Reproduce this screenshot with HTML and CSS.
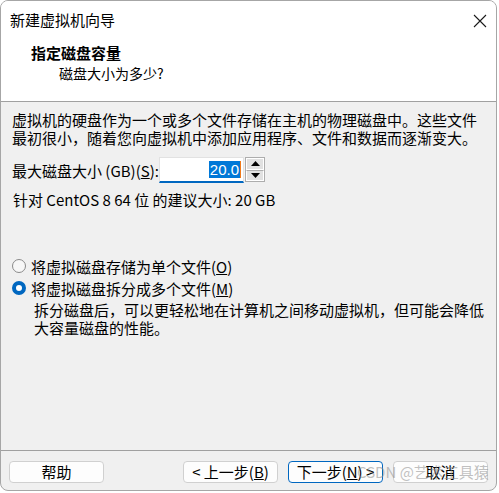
FILE: index.html
```html
<!DOCTYPE html>
<html lang="zh-CN">
<head>
<meta charset="utf-8">
<title>新建虚拟机向导</title>
<link rel="stylesheet" href="styles.css">
</head>
<body>
<div class="window">
  <div class="titlebar">
    <span class="title">新建虚拟机向导</span>
    <svg class="close" width="14" height="14" viewBox="0 0 14 14"><path d="M1 1L13 13M13 1L1 13" stroke="#1a1a1a" stroke-width="1.1" fill="none"/></svg>
  </div>
  <div class="header">
    <div class="h-title">指定磁盘容量</div>
    <div class="h-sub">磁盘大小为多少?</div>
  </div>
  <div class="content">
    <p class="intro">虚拟机的硬盘作为一个或多个文件存储在主机的物理磁盘中。这些文件<br>最初很小，随着您向虚拟机中添加应用程序、文件和数据而逐渐变大。</p>
    <div class="size-row">
      <span class="label">最大磁盘大小 (GB)(<u>S</u>):</span>
      <div class="input"><span class="sel">20.0</span><span class="caret"></span></div>
      <div class="spin">
        <div class="spin-btn"><svg width="9" height="5" viewBox="0 0 9 5"><path d="M4.5 0L9 5H0Z" fill="#000"/></svg></div>
        <div class="spin-btn"><svg width="9" height="5" viewBox="0 0 9 5"><path d="M0 0H9L4.5 5Z" fill="#000"/></svg></div>
      </div>
    </div>
    <p class="rec">针对 CentOS 8 64 位 的建议大小: 20 GB</p>
    <div class="options">
      <div class="opt"><span class="radio"></span><span>将虚拟磁盘存储为单个文件(<u>O</u>)</span></div>
      <div class="opt"><span class="radio on"></span><span>将虚拟磁盘拆分成多个文件(<u>M</u>)</span></div>
      <p class="desc">拆分磁盘后，可以更轻松地在计算机之间移动虚拟机，但可能会降低<br>大容量磁盘的性能。</p>
    </div>
  </div>
  <div class="footer">
    <button class="btn">帮助</button>
    <div class="nav">
      <button class="btn">&lt; 上一步(<u>B</u>)</button>
      <button class="btn default">下一步(<u>N</u>) &gt;</button>
      <button class="btn">取消</button>
    </div>
  </div>
  <div class="watermark">CSDN @艺术工具猿</div>
</div>
</body>
</html>
```
FILE: styles.css
```css
* { box-sizing: border-box; }
html, body { margin: 0; padding: 0; background: #ffffff; }
body {
  width: 499px;
  height: 493px;
  overflow: hidden;
  font-family: "Noto Sans CJK SC", "Noto Sans", sans-serif;
  font-size: 15px;
  color: #000;
}
.window {
  position: relative;
  width: 497px;
  height: 491px;
  border: 1px solid #a6a6a6;
  border-radius: 8px;
  overflow: hidden;
  display: flex;
  flex-direction: column;
  background: #f0f0f0;
}
.titlebar {
  height: 38px;
  background: #fff;
  display: flex;
  align-items: center;
  justify-content: space-between;
  padding: 0 9px 0 9px;
}
.title { font-size: 15px; line-height: 20px; }
.close { display: block; margin-top: 1px; }
.header {
  height: 63px;
  background: #fff;
  border-bottom: 1px solid #a0a0a0;
  padding: 4px 0 0 30px;
}
.h-title { font-weight: bold; font-size: 15px; line-height: 20px; }
.h-sub { padding-left: 28px; line-height: 20px; margin-top: 0; font-size: 14px; }
.content {
  flex: 1;
  padding: 9px 0 0 11px;
}
.intro { margin: 0; line-height: 18px; }
.size-row {
  display: flex;
  align-items: center;
  margin-top: 10px;
  height: 26px;
}
.label { width: 147px; }
.input {
  width: 85px;
  height: 26px;
  background: #fff;
  border: 1px solid #e2e2e2;
  border-bottom: 2px solid #0067c0;
  display: flex;
  justify-content: flex-end;
  align-items: center;
  padding-right: 2px;
}
.sel {
  background: #0078d7;
  color: #fff;
  font-family: "Liberation Sans", sans-serif;
  font-size: 15px;
  line-height: 17px;
  padding: 0 1px;
}
.caret { width: 1px; height: 17px; background: #f07a1a; }
.spin {
  width: 20px;
  height: 25px;
  margin-left: 1px;
  border: 1px solid #adadad;
  display: flex;
  flex-direction: column;
  background: #e9e9e9;
  align-self: flex-start;
}
.spin-btn {
  flex: 1;
  display: flex;
  align-items: center;
  justify-content: center;
  border: 1px solid #fff;
  background: #e1e1e1;
}
.spin-btn + .spin-btn { border-top: 1px solid #adadad; }
.spin-btn svg { display: block; }
.rec { margin: 8px 0 0 1px; line-height: 18px; }
.options { margin-top: 46px; }
.opt {
  display: flex;
  align-items: center;
  height: 22px;
  gap: 5px;
}
.radio {
  width: 14px;
  height: 14px;
  border-radius: 50%;
  border: 1px solid #8a8a8a;
  background: #f7f7f7;
  flex: none;
}
.radio.on {
  border: 4px solid #0067c0;
  background: #fff;
}
.desc { margin: 2px 0 0 22px; line-height: 18px; }
.footer {
  height: 40px;
  border-top: 1px solid #a0a0a0;
  display: flex;
  align-items: flex-start;
  justify-content: space-between;
  padding: 10px 8px 0 8px;
}
.nav { display: flex; gap: 10px; }
.btn {
  width: 95px;
  height: 22px;
  border: 1px solid #d0d0d0;
  border-radius: 4px;
  background: #fdfdfd;
  font-family: "Noto Sans CJK SC", "Noto Sans", sans-serif;
  font-size: 15px;
  line-height: 18px;
  padding: 0;
  color: #000;
}
.btn.default { border: 1px solid #0067c0; }
.watermark {
  position: absolute;
  left: 356px;
  top: 461px;
  font-size: 15px;
  line-height: 20px;
  white-space: nowrap;
  color: rgba(140, 140, 140, 0.55);
  pointer-events: none;
}
```
